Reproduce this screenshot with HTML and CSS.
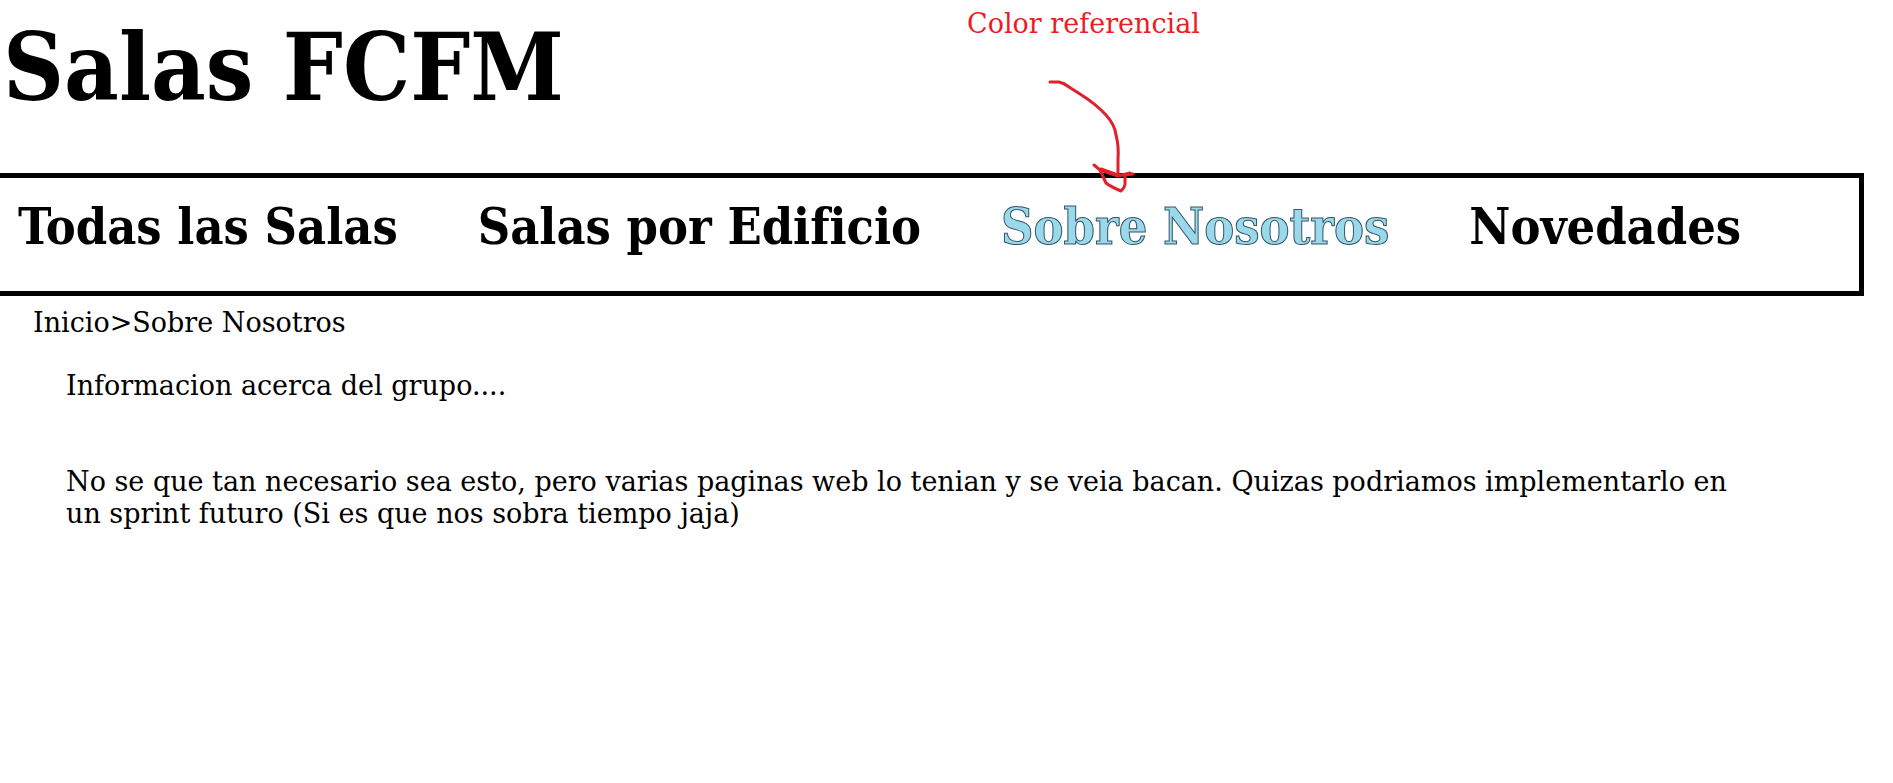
FILE: index.html
```html
<!DOCTYPE html>
<html lang="es">
<head>
<meta charset="utf-8">
<title>Salas FCFM</title>
<link rel="stylesheet" href="styles.css">
</head>
<body>
<header class="header">
  <h1 class="title">Salas FCFM</h1>
  <p class="note">Color referencial</p>
  <svg class="arrow" width="100" height="120" viewBox="1040 75 100 120" aria-hidden="true">
    <path d="M1050 82 H1059 Q1064 83 1069 87 L1080 94 Q1096 104 1106 115 Q1115 125 1116 135 Q1119 146 1118 160 V175"/>
    <path d="M1094 165 L1100 170 L1106 183 Q1111 187 1121 191 Q1125 187 1125 184 V175 L1133 174 L1118 175 L1101 169 M1103 171 L1118 176 L1130 173"/>
  </svg>
</header>
<nav class="nav">
  <a class="nav-link" href="#salas">Todas las Salas</a>
  <a class="nav-link" href="#edificio">Salas por Edificio</a>
  <a class="nav-link nav-link-active" href="#nosotros" aria-current="page">Sobre Nosotros</a>
  <a class="nav-link" href="#novedades">Novedades</a>
</nav>
<main class="content">
  <div class="breadcrumb"><a href="#inicio">Inicio&gt;</a><span>Sobre Nosotros</span></div>
  <p class="text">Informacion acerca del grupo....</p>
  <p class="text">No se que tan necesario sea esto, pero varias paginas web lo tenian y se veia bacan. Quizas podriamos implementarlo en un sprint futuro (Si es que nos sobra tiempo jaja)</p>
</main>
</body>
</html>
```
FILE: styles.css
```css
* { box-sizing: border-box; }

body {
  margin: 0;
  background: #fff;
  color: #000;
  font-family: "DejaVu Serif", serif;
  font-size: 27px;
  line-height: 32px;
}

a { color: inherit; text-decoration: none; }

.header {
  position: relative;
  padding: 7px 3px 46px;
}

.title {
  margin: 0;
  font-family: "DejaVu Serif Condensed", "DejaVu Serif", serif;
  font-size: 94px;
  line-height: 120px;
}

.note {
  position: absolute;
  top: 8px;
  left: 967px;
  margin: 0;
  color: #ed1c24;
}

.arrow {
  position: absolute;
  top: 75px;
  left: 1040px;
  fill: none;
  stroke: #e2202b;
  stroke-width: 3;
  stroke-linecap: round;
  stroke-linejoin: round;
}

.nav {
  display: flex;
  gap: 80px;
  margin-right: 29px;
  padding: 21px 18px 36px;
  border: 5px solid #000;
  border-left: 0;
  font-family: "DejaVu Serif Condensed", "DejaVu Serif", serif;
  font-size: 50px;
  font-weight: bold;
  line-height: 56px;
}

.nav-link { white-space: nowrap; }

.nav-link-active {
  color: #99d9ea;
  -webkit-text-stroke: 1px #35556b;
}

.content { padding: 11px 160px 32px 33px; }

.breadcrumb { display: flex; }

.text { margin: 31px 0 64px 33px; }
.text + .text { margin: 0 0 0 33px; }
```
